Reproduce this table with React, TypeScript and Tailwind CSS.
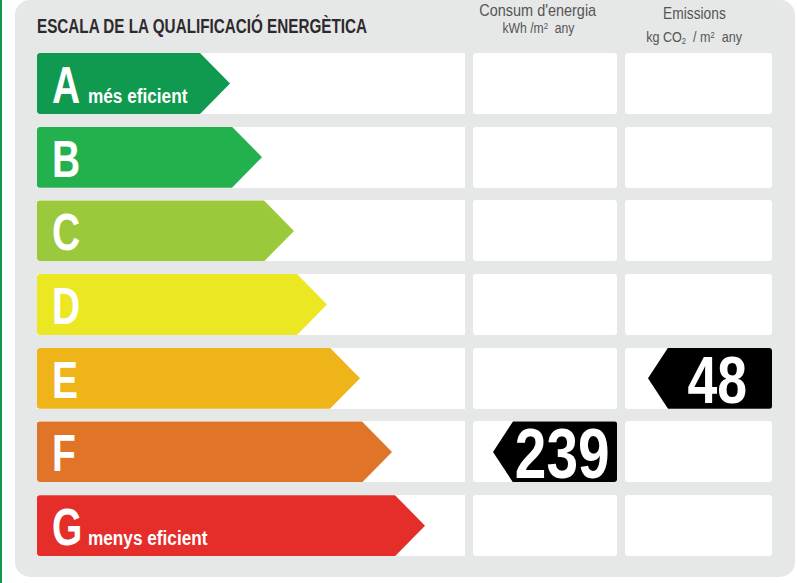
import React from "react";

const sans = "[font-family:'Liberation_Sans',Arial,sans-serif]";

const rows = [
    { letter: "A", sub: "més eficient", bg: "bg-[#0f9a4f]", w: "w-[193px]" },
    { letter: "B", sub: "", bg: "bg-[#22b14c]", w: "w-[225px]" },
    { letter: "C", sub: "", bg: "bg-[#9bc93c]", w: "w-[257px]" },
    { letter: "D", sub: "", bg: "bg-[#ebe723]", w: "w-[290px]" },
    { letter: "E", sub: "", bg: "bg-[#f0b41b]", w: "w-[323px]" },
    { letter: "F", sub: "", bg: "bg-[#e07428]", w: "w-[355px]" },
    { letter: "G", sub: "menys eficient", bg: "bg-[#e52d2a]", w: "w-[388px]" },
];

const consum = { F: "239" } as Record<string, string>;
const emissions = { E: "48" } as Record<string, string>;

function Badge({ value, big }: { value: string; big?: boolean }) {
    return (
        <div className="flex h-full w-[124px] items-center justify-center rounded-r-[3px] bg-black pl-[20px] pr-[6px] [clip-path:polygon(20px_0,100%_0,100%_100%,20px_100%,0_50%)]">
            <span
                className={`${sans} mt-[3px] inline-block shrink-0 origin-center scale-x-[0.8] whitespace-nowrap font-bold leading-none text-white ${big ? "text-[71px]" : "text-[67px]"}`}
            >
                {value}
            </span>
        </div>
    );
}

export default function App() {
    return (
        <div className="flex h-[583px] w-[797px] bg-white">
            <div className="h-full w-[2px] bg-[#0f9a50]" />
            <div className="ml-[13px] h-[577px] w-[780px] rounded-[15px] bg-[#e6e7e7] pl-[22px] pr-[23px]">
                <div className="flex h-[53px] gap-[8px]">
                    <div className="w-[428px] pt-[14px]">
                        <h1 className={`${sans} text-[21px] font-bold leading-[24px] text-[#2d2a2e]`}>
                            <span className="inline-block origin-left scale-x-[0.726] whitespace-nowrap">
                                ESCALA DE LA QUALIFICACIÓ ENERGÈTICA
                            </span>
                        </h1>
                    </div>
                    <div className={`${sans} flex w-[144px] flex-col items-center pr-[14px] text-[#555]`}>
                        <div className="mt-[1px] text-[17px] leading-[20px]">
                            <span className="inline-block origin-center scale-x-[0.85] whitespace-nowrap">Consum d'energia</span>
                        </div>
                        <div className="-mt-[1px] text-[14px] leading-[16px]">
                            <span className="inline-block origin-center scale-x-[0.87] whitespace-nowrap">
                                kWh /m<sup className="text-[9px]">2</sup>&nbsp; any
                            </span>
                        </div>
                    </div>
                    <div className={`${sans} flex w-[147px] flex-col items-center pr-[8px] text-[#555]`}>
                        <div className="mt-[4px] text-[16px] leading-[20px]">
                            <span className="inline-block origin-center scale-x-[0.86] whitespace-nowrap">Emissions</span>
                        </div>
                        <div className="mt-[5px] text-[15px] leading-[16px]">
                            <span className="inline-block origin-center scale-x-[0.84] whitespace-nowrap">
                                kg CO<sub className="text-[9px]">2</sub>&nbsp; / m<sup className="text-[9px]">2</sup>&nbsp; any
                            </span>
                        </div>
                    </div>
                </div>
                <div className="flex flex-col gap-[12.7px]">
                    {rows.map((r) => (
                        <div key={r.letter} className="flex h-[61px] gap-[8px]">
                            <div className="w-[428px] bg-white">
                                <div
                                    className={`${r.bg} ${r.w} flex h-full items-end rounded-l-[3px] pb-[3px] pl-[15px] [clip-path:polygon(0_0,calc(100%_-_30px)_0,100%_50%,calc(100%_-_30px)_100%,0_100%)]`}
                                >
                                    <div className={`${sans} whitespace-nowrap text-[52px] font-bold leading-none text-white`}>
                                        <span className="inline-block w-[36px]">
                                            <span className="inline-block origin-left scale-x-[0.75]">{r.letter}</span>
                                        </span>
                                        {r.sub && (
                                            <span className="inline-block origin-left scale-x-[0.86] text-[20px] leading-none">
                                                {r.sub}
                                            </span>
                                        )}
                                    </div>
                                </div>
                            </div>
                            <div className="flex w-[144px] justify-end rounded-[3px] bg-white">
                                {consum[r.letter] && <Badge value={consum[r.letter]} big />}
                            </div>
                            <div className="flex w-[147px] justify-end rounded-[3px] bg-white">
                                {emissions[r.letter] && <Badge value={emissions[r.letter]} />}
                            </div>
                        </div>
                    ))}
                </div>
            </div>
        </div>
    );
}
